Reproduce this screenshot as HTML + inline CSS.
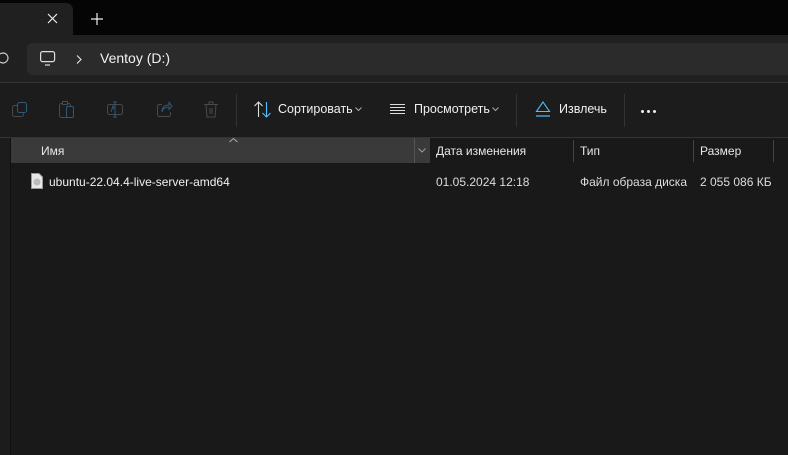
<!DOCTYPE html>
<html><head><meta charset="utf-8"><style>
*{margin:0;padding:0;box-sizing:border-box}
body{width:788px;height:455px;background:#191919;font-family:"Segoe UI","Liberation Sans",sans-serif;color:#fff;position:relative;overflow:hidden;font-size:12px}
.a{position:absolute}
svg{position:absolute;overflow:visible}
</style></head><body>
<div class="a" style="left:0;top:0;width:788px;height:35px;background:#050505"></div>
<div class="a" style="left:0;top:3px;width:73px;height:32px;background:#202020;border-top-right-radius:7px"></div>
<svg style="left:47px;top:13px" width="11" height="11"><path d="M1 1L10 10M10 1L1 10" stroke="#eee" stroke-width="1.2"/></svg>
<svg style="left:91px;top:13px" width="12" height="12"><path d="M6 0V12M0 6H12" stroke="#eee" stroke-width="1.2"/></svg>
<div class="a" style="left:0;top:35px;width:788px;height:47px;background:#202020"></div>
<div class="a" style="left:27px;top:43px;width:761px;height:32px;background:#2b2b2b;border-radius:5px 0 0 5px"></div>
<svg style="left:0;top:52px" width="6" height="12"><path d="M0 2A5 5 0 1 1 0 10" stroke="#ccc" fill="none" stroke-width="1.2"/></svg>
<svg style="left:40px;top:51px" width="16" height="15"><rect x="0.6" y="0.6" width="14" height="10" rx="2" stroke="#ddd" fill="none" stroke-width="1.2"/><path d="M5 14H10" stroke="#ddd" stroke-width="1.2"/></svg>
<svg style="left:76px;top:55px" width="6" height="9"><path d="M1 0.5L5 4.5L1 8.5" stroke="#ddd" fill="none" stroke-width="1.2"/></svg>
<div class="a" style="left:100px;top:50px;font-size:14px;color:#f2f2f2">Ventoy (D:)</div>
<div class="a" style="left:0;top:82px;width:788px;height:1px;background:#333"></div>
<div class="a" style="left:0;top:83px;width:788px;height:54px;background:#1c1c1c"></div>
<svg style="left:12px;top:102px" width="16" height="16"><rect x="0.5" y="3.5" width="11" height="11" rx="2" stroke="#4a4a4a" fill="none"/><rect x="5.5" y="0.5" width="9" height="10" rx="2" stroke="#2c5a78" fill="#1c1c1c"/></svg>
<svg style="left:59px;top:101px" width="16" height="18"><rect x="0.5" y="2.5" width="11" height="14" rx="2" stroke="#4a4a4a" fill="none"/><rect x="3.5" y="0.5" width="5" height="3" stroke="#4a4a4a" fill="#1c1c1c"/><rect x="7.5" y="5.5" width="7" height="11" rx="1" stroke="#2c5a78" fill="#1c1c1c"/></svg>
<svg style="left:107px;top:101px" width="17" height="18"><rect x="0.5" y="3.5" width="15" height="10" rx="2" stroke="#4a4a4a" fill="none"/><path d="M8 1V16M6 1H10M6 16H10M4 11L6 5L7 8" stroke="#2c5a78" fill="none"/></svg>
<svg style="left:157px;top:101px" width="16" height="17"><path d="M5 3.5H2.5Q0.5 3.5 0.5 5.5V13.5Q0.5 15.5 2.5 15.5H11.5Q13.5 15.5 13.5 13.5V11" stroke="#4a4a4a" fill="none"/><path d="M5 11Q6 6 12 6V8.5L15 5L12 1.5V4Q5 4 5 11Z" stroke="#2c5a78" fill="none"/></svg>
<svg style="left:204px;top:101px" width="15" height="17"><path d="M0 3.5H14M5 3.5V1H9V3.5M2 3.5L3 16H11L12 3.5M6 7V13M8 7V13" stroke="#4a4a4a" fill="none"/></svg>
<div class="a" style="left:236px;top:94px;width:1px;height:33px;background:#333"></div>
<svg style="left:254px;top:101px" width="18" height="17"><path d="M4.5 16V1M0.5 5L4.5 1L8.5 5" stroke="#ddd" fill="none" stroke-width="1.1"/><path d="M12.5 1V16M8.5 12L12.5 16L16.5 12" stroke="#4cc2ff" fill="none" stroke-width="1.1"/></svg>
<div class="a" style="left:278px;top:102px;font-size:12.5px;color:#f0f0f0">Сортировать</div>
<svg style="left:355px;top:107px" width="7" height="5"><path d="M0.5 0.5L3.5 3.5L6.5 0.5" stroke="#aaa" fill="none"/></svg>
<div class="a" style="left:516px;top:94px;width:1px;height:33px;background:#333"></div>
<svg style="left:390px;top:104px" width="15" height="11"><path d="M0 0.5H15M0 3.5H15M0 6.5H15M0 9.5H15" stroke="#ddd"/></svg>
<div class="a" style="left:414px;top:102px;font-size:12.5px;color:#f0f0f0">Просмотреть</div>
<svg style="left:492px;top:107px" width="7" height="5"><path d="M0.5 0.5L3.5 3.5L6.5 0.5" stroke="#aaa" fill="none"/></svg>
<svg style="left:535px;top:101px" width="16" height="16"><path d="M8 1L14.5 10.5H1.5Z" stroke="#4cc2ff" fill="none" stroke-width="1.1"/><path d="M1 15H15" stroke="#4cc2ff" stroke-width="1.2"/></svg>
<div class="a" style="left:559px;top:102px;font-size:12.5px;color:#f0f0f0">Извлечь</div>
<div class="a" style="left:624px;top:94px;width:1px;height:33px;background:#333"></div>
<div class="a" style="left:641px;top:110px;width:3px;height:3px;background:#eee;border-radius:50%;box-shadow:6px 0 #eee,12px 0 #eee"></div>
<div class="a" style="left:0;top:137px;width:788px;height:1px;background:#333"></div>
<div class="a" style="left:0;top:138px;width:10px;height:317px;background:#1c1c1c"></div>
<div class="a" style="left:10px;top:138px;width:1px;height:317px;background:#111"></div>
<div class="a" style="left:11px;top:138px;width:419px;height:25px;background:#3a3a3a"></div>
<div class="a" style="left:414px;top:138px;width:1px;height:25px;background:#555"></div>
<svg style="left:229px;top:138px" width="9" height="5"><path d="M0.5 4L4.5 0.5L8.5 4" stroke="#aaa" fill="none"/></svg>
<svg style="left:418px;top:148px" width="8" height="5"><path d="M0.5 0.5L4 4L7.5 0.5" stroke="#999" fill="none"/></svg>
<div class="a" style="left:41px;top:144px;color:#e8e8e8">Имя</div>
<div class="a" style="left:573px;top:140px;width:1px;height:22px;background:#444"></div>
<div class="a" style="left:693px;top:140px;width:1px;height:22px;background:#444"></div>
<div class="a" style="left:773px;top:140px;width:1px;height:22px;background:#444"></div>
<div class="a" style="left:436px;top:144px;color:#e8e8e8">Дата изменения</div>
<div class="a" style="left:580px;top:144px;color:#e8e8e8">Тип</div>
<div class="a" style="left:700px;top:144px;color:#e8e8e8">Размер</div>
<svg style="left:31px;top:173px" width="12" height="16"><path d="M0.5 0.5H8L11.5 4V15.5H0.5Z" fill="#e8e8e8" stroke="#999"/><circle cx="6" cy="9" r="3.5" fill="#bbb"/></svg>
<div class="a" style="left:49px;top:175px;color:#f0f0f0">ubuntu-22.04.4-live-server-amd64</div>
<div class="a" style="left:436px;top:175px;color:#ddd">01.05.2024 12:18</div>
<div class="a" style="left:580px;top:175px;color:#ddd">Файл образа диска</div>
<div class="a" style="left:700px;top:175px;color:#ddd">2 055 086 КБ</div>
</body></html>
